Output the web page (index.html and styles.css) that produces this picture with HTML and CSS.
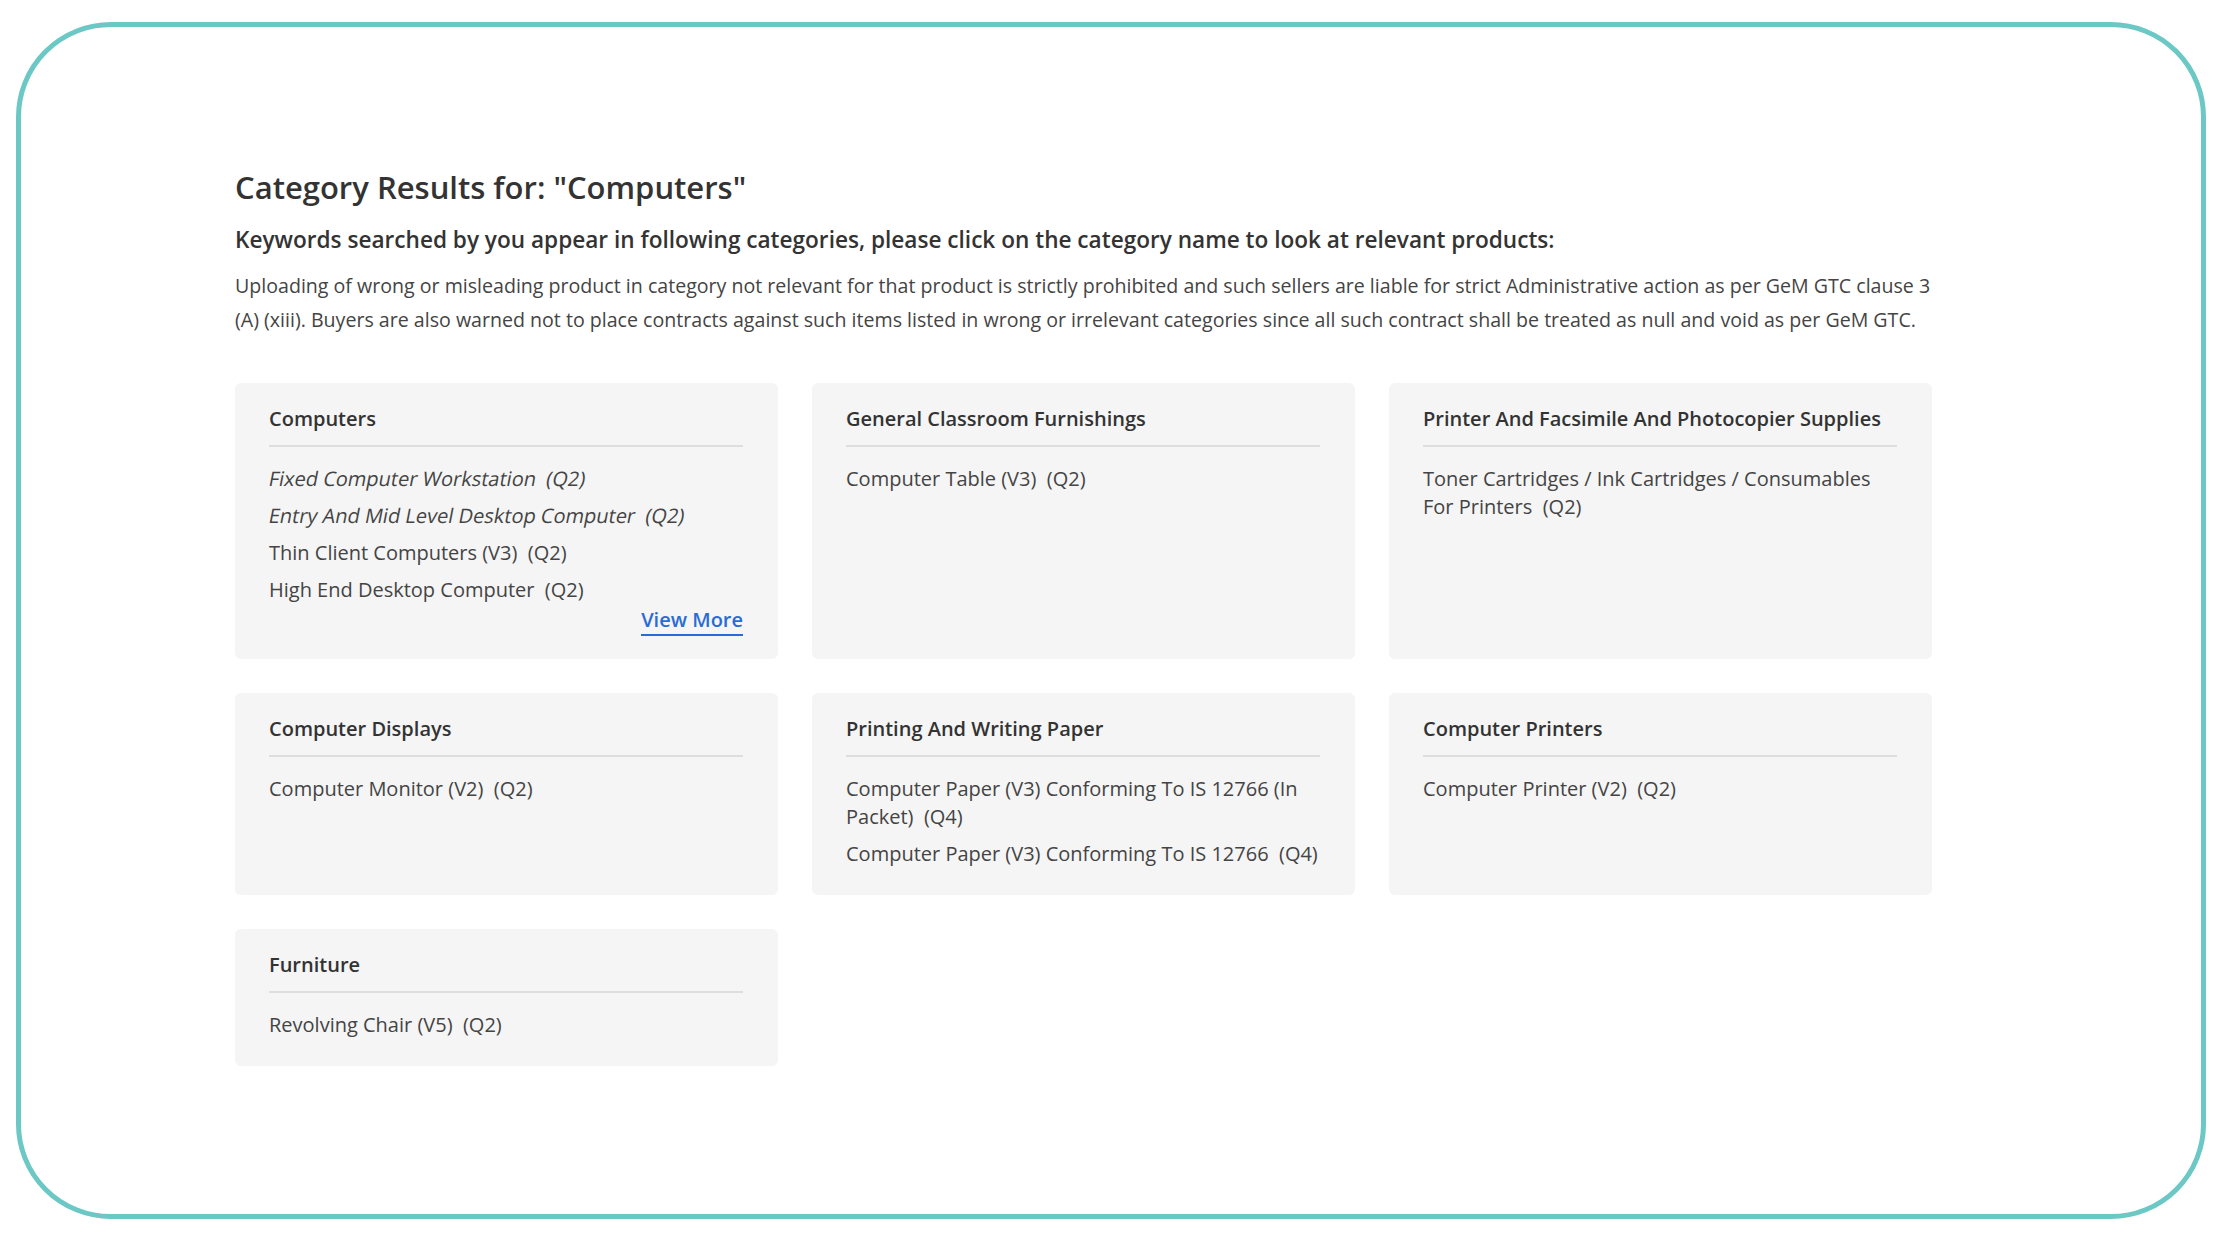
FILE: index.html
```html
<!DOCTYPE html>
<html lang="en">
<head>
    <meta charset="UTF-8">
    <meta name="viewport" content="width=device-width, initial-scale=1.0">
    <title>Category Results - Computers</title>
    <link rel="stylesheet" href="styles.css">
</head>
<body>
    <div class="frame">
        <div class="container">
            <h1>Category Results for: "Computers"</h1>
            <h2 class="subhead">Keywords searched by you appear in following categories, please click on the category name to look at relevant products:</h2>
            <p class="notice">Uploading of wrong or misleading product in category not relevant for that product is strictly prohibited and such sellers are liable for strict Administrative action as per GeM GTC clause 3 (A) (xiii). Buyers are also warned not to place contracts against such items listed in wrong or irrelevant categories since all such contract shall be treated as null and void as per GeM GTC.</p>

            <div class="category-grid">
                <div class="category-card">
                    <h3>Computers</h3>
                    <ul>
                        <li><span class="slant">Fixed Computer Workstation&nbsp; (Q2)</span></li>
                        <li><span class="slant">Entry And Mid Level Desktop Computer&nbsp; (Q2)</span></li>
                        <li>Thin Client Computers (V3)&nbsp; (Q2)</li>
                        <li>High End Desktop Computer&nbsp; (Q2)</li>
                    </ul>
                    <div class="more"><a href="#">View More</a></div>
                </div>

                <div class="category-card">
                    <h3>General Classroom Furnishings</h3>
                    <ul>
                        <li>Computer Table (V3)&nbsp; (Q2)</li>
                    </ul>
                </div>

                <div class="category-card">
                    <h3>Printer And Facsimile And Photocopier Supplies</h3>
                    <ul>
                        <li>Toner Cartridges / Ink Cartridges / Consumables For Printers&nbsp; (Q2)</li>
                    </ul>
                </div>

                <div class="category-card">
                    <h3>Computer Displays</h3>
                    <ul>
                        <li>Computer Monitor (V2)&nbsp; (Q2)</li>
                    </ul>
                </div>

                <div class="category-card">
                    <h3>Printing And Writing Paper</h3>
                    <ul>
                        <li>Computer Paper (V3) Conforming To IS 12766 (In Packet)&nbsp; (Q4)</li>
                        <li>Computer Paper (V3) Conforming To IS 12766&nbsp; (Q4)</li>
                    </ul>
                </div>

                <div class="category-card">
                    <h3>Computer Printers</h3>
                    <ul>
                        <li>Computer Printer (V2)&nbsp; (Q2)</li>
                    </ul>
                </div>

                <div class="category-card">
                    <h3>Furniture</h3>
                    <ul>
                        <li>Revolving Chair (V5)&nbsp; (Q2)</li>
                    </ul>
                </div>
            </div>
        </div>
    </div>
</body>
</html>
```

FILE: styles.css
```css
* {
    margin: 0;
    padding: 0;
    box-sizing: border-box;
}

body {
    font-family: 'Open Sans', 'Liberation Sans', Arial, sans-serif;
    background-color: #fff;
    color: #333;
    padding: 22px 17px 21px 16px;
}

.frame {
    height: 1197px;
    border: 5px solid #6bc8c4;
    border-radius: 95px;
    background: #fff;
    padding: 142px 0 0 214px;
}

.container {
    width: 1697px;
}

h1 {
    font-size: 31px;
    line-height: 36px;
    font-weight: 600;
    color: #333;
    margin-bottom: 20px;
}

.subhead {
    font-size: 22.6px;
    line-height: 30px;
    font-weight: 600;
    color: #333;
    margin-bottom: 14px;
}

.notice {
    font-size: 19.6px;
    line-height: 34px;
    color: #444;
    margin-bottom: 46px;
}

.category-grid {
    display: grid;
    grid-template-columns: repeat(3, 1fr);
    gap: 34px;
}

.category-card {
    background-color: #f5f5f5;
    border-radius: 6px;
    padding: 22px 35px 27px 34px;
}

.category-card h3 {
    font-size: 20px;
    line-height: 28px;
    font-weight: 600;
    color: #333;
    padding-bottom: 12px;
    border-bottom: 2px solid #dedede;
    margin-bottom: 18px;
}

.category-card ul {
    list-style: none;
}

.category-card li {
    font-size: 20px;
    line-height: 28px;
    color: #444;
    margin-bottom: 9px;
}

.category-card li:last-child {
    margin-bottom: 0;
}

/* the site slants the regular face instead of using the italic one */
.slant {
    display: inline-block;
    transform: skewX(-11deg);
}

.more {
    text-align: right;
    line-height: 28px;
    margin: 2px 0 -4px;
}

.more a {
    display: inline-block;
    font-size: 20px;
    line-height: 28px;
    font-weight: 600;
    color: #2b6cd4;
    text-decoration: none;
    border-bottom: 2px solid #2b6cd4;
}
```
